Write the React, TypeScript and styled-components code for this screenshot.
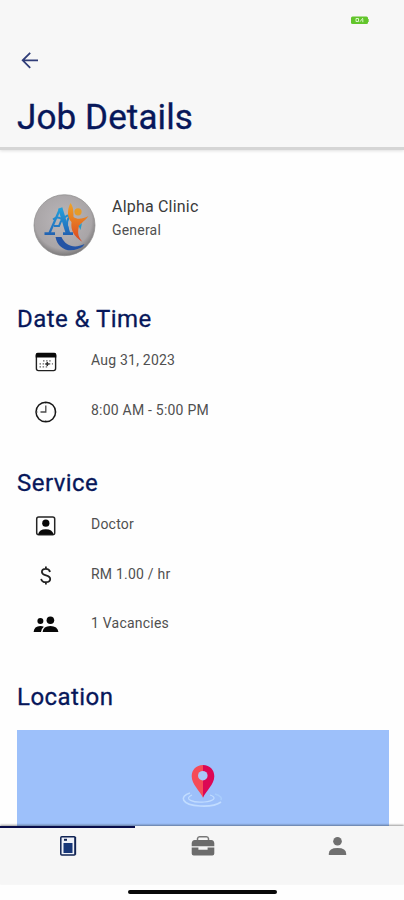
import React from 'react';
import styled, { createGlobalStyle } from 'styled-components';

const navy = '#07175a';

const GlobalStyle = createGlobalStyle`
  * { box-sizing: border-box; }
  body { margin: 0; background: #fefefe; font-family: Roboto, "Liberation Sans", sans-serif; }
  svg { display: block; flex: none; }
`;

const Screen = styled.div`
  width: 404px;
  height: 900px;
  display: flex;
  flex-direction: column;
  overflow: hidden;
`;

const Header = styled.header`
  height: 150px;
  flex: none;
  background: #f7f7f7;
  border-bottom: 3px solid #d5d5d5;
  box-shadow: 0 1px 3px rgba(0, 0, 0, 0.12);
`;

const StatusBar = styled.div`
  height: 40px;
  display: flex;
  justify-content: flex-end;
  padding: 16px 35px 0 0;
`;

const BackButton = styled.button`
  display: block;
  border: 0;
  padding: 0;
  margin: 11px 0 0 20px;
  background: none;
`;

const Title = styled.h1`
  margin: 27px 0 0 17px;
  font-size: 35px;
  line-height: 41px;
  font-weight: 400;
  letter-spacing: 0.12px;
  -webkit-text-stroke: 0.35px ${navy};
  color: ${navy};
`;

const Content = styled.main`
  flex: 1;
  min-height: 0;
  overflow: hidden;
  padding: 44px 15px 0 17px;
`;

const Clinic = styled.section`
  display: flex;
  gap: 16px;
  height: 104px;
  padding-left: 16px;
`;

const ClinicText = styled.div`
  padding-top: 3px;
`;

const ClinicName = styled.div`
  font-size: 16px;
  line-height: 20px;
  letter-spacing: 0.2px;
  color: #3a3a3a;
`;

const ClinicType = styled.div`
  margin-top: 3px;
  font-size: 14px;
  line-height: 20px;
  letter-spacing: 0.2px;
  color: #505050;
`;

const Section = styled.section<{ $height: number }>`
  height: ${(p) => p.$height}px;
  padding-top: 7px;
`;

const Heading = styled.h2`
  margin: 0;
  font-size: 24px;
  line-height: 28px;
  font-weight: 400;
  letter-spacing: 0.45px;
  -webkit-text-stroke: 0.3px ${navy};
  color: ${navy};
`;

const Row = styled.div`
  display: flex;
  align-items: flex-start;
  height: 49.5px;
  padding: 18px 0 0 16px;
`;

const RowIcon = styled.div`
  width: 58px;
`;

const RowText = styled.span`
  margin-top: -1px;
  font-size: 14px;
  line-height: 20px;
  letter-spacing: 0.22px;
  color: #505050;
`;

const Map = styled.div`
  display: flex;
  justify-content: center;
  height: 150px;
  margin-top: 19px;
  padding-top: 32px;
  background: #9dc0fa;
`;

const Nav = styled.nav`
  display: grid;
  grid-template-columns: 135px 135px 134px;
  height: 58px;
  flex: none;
  background: #f6f6f6;
  box-shadow: 0 -1px 2px rgba(0, 0, 0, 0.4);
  z-index: 1;
`;

const Tab = styled.button<{ $active?: boolean }>`
  display: flex;
  justify-content: center;
  border: 0;
  border-top: 2px solid ${(p) => (p.$active ? '#080d4a' : 'transparent')};
  padding: 7px 0 0;
  background: none;
`;

const HomeArea = styled.div`
  display: flex;
  justify-content: center;
  height: 16px;
  flex: none;
  padding-top: 6px;
  background: #fefefe;
`;

const HomeBar = styled.div`
  width: 149px;
  height: 4px;
  border-radius: 2px;
  background: #080808;
`;

const Battery = () => (
  <svg width="18" height="9" viewBox="0 0 18 9">
    <rect x="0" y="0.5" width="17" height="7.5" rx="1.5" fill="#62c52b" />
    <path d="M17.5 3v3" stroke="#8fd96a" />
    <path d="M5 2.5h2.5v3H5zM9 5.7l3-3.7M11.8 3.2v3" fill="none" stroke="#d9f6c8" strokeWidth="1" />
  </svg>
);

const Arrow = () => (
  <svg width="20" height="19" viewBox="0 0 20 19" fill="none" stroke="#303d78" strokeWidth="1.8">
    <path d="M18 9.3H3M10.2 1.8 2.7 9.3l7.5 7.5" />
  </svg>
);

const Logo = () => (
  <svg width="63" height="63" viewBox="0 0 63 63">
    <defs>
      <radialGradient id="disc" cx=".48" cy=".42" r=".58">
        <stop offset="0" stopColor="#bbb7ba" />
        <stop offset=".8" stopColor="#a9a5a7" />
        <stop offset="1" stopColor="#7b797a" />
      </radialGradient>
      <linearGradient id="blue" gradientUnits="userSpaceOnUse" x1="0" y1="13" x2="0" y2="54">
        <stop offset="0" stopColor="#22a2dc" />
        <stop offset=".5" stopColor="#2376c2" />
        <stop offset="1" stopColor="#203c91" />
      </linearGradient>
      <linearGradient id="orange" x1="0" y1="0" x2="0" y2="1">
        <stop offset="0" stopColor="#efa427" />
        <stop offset="1" stopColor="#dc4520" />
      </linearGradient>
    </defs>
    <circle cx="31.5" cy="31.2" r="30.5" fill="url(#disc)" stroke="#8b898a" strokeWidth=".7" />
    <g fill="none" stroke="url(#blue)">
      <path d="M27 15 16.5 39" strokeWidth="2.2" />
      <path d="m27.2 14 8 26" strokeWidth="4.4" />
      <path d="M11.5 39.7H22M30 39.7h10" strokeWidth="2.8" />
      <path d="M21 32h5c2-6 6-11 12-11-4 4-5 9-3 14" strokeWidth="2" />
      <path d="M20 25.5q5-4 9 0" strokeWidth="1.8" />
    </g>
    <path d="M22.5 43c2 11 12 16 22 12 4-1 6-3 7-5-10 5-19 2-23-7z" fill="#2454a5" />
    <path d="M37.5 9c3 4 3 9 3 14 4 3 9 2 15-1-4 6-9 7-10 12-1 6 0 9 4 14-9-6-12-12-11-20-5-5-4-13-1-19z" fill="url(#orange)" />
    <circle cx="45" cy="17.8" r="3.6" fill="#e59b2a" />
    <path d="m45.5 32 3.5-3-1.5 7z" fill="#289bc8" />
  </svg>
);

const CalendarIcon = () => (
  <svg width="26" height="22" viewBox="0 0 26 22">
    <rect x="3.4" y="2.6" width="19.2" height="17" rx="2" fill="#fff" stroke="#202020" strokeWidth="1.4" />
    <path d="M2.7 6.4V3.8q0-2 2-2h16.6q2 0 2 2v2.6z" fill="#090909" />
    <path d="M10 9.9h9M6.5 12.9H20M6.5 15.9h9" stroke="#666" strokeWidth="1.2" strokeDasharray="1.5 1.6" />
    <path d="M14.3 10.9v4M12.3 12.9h4" stroke="#333" strokeWidth="1.5" />
  </svg>
);

const ClockIcon = () => (
  <svg width="26" height="24" viewBox="0 0 26 24" fill="none">
    <circle cx="12.8" cy="11" r="9.8" stroke="#181818" strokeWidth="1.5" />
    <path d="M12.8 4.5V11H7.5" stroke="#4b4b4b" strokeWidth="1.3" />
    <path d="M12.8 2v1M12.8 19v1M3.8 11h1M20.8 11h1" stroke="#777" />
  </svg>
);

const PersonBoxIcon = () => (
  <svg width="26" height="22" viewBox="0 0 26 22">
    <rect x="3.7" y="2" width="18" height="17.8" rx="2" fill="#fff" stroke="#252525" strokeWidth="1.5" />
    <circle cx="12.8" cy="8.2" r="3.6" fill="#090909" />
    <path d="M5 19.5q1.2-5.2 7.8-5.2t7.8 5.2z" fill="#090909" />
  </svg>
);

const DollarIcon = () => (
  <svg width="26" height="22" viewBox="0 0 26 22" fill="none" stroke="#222" strokeWidth="1.8">
    <path d="M17 7C16.3 2.9 8.9 3 8.9 7c0 4.4 8.3 2.4 8.3 7 0 4.2-8.3 4.4-9-.2M12.9 1.5V4M12.9 17v2.4" />
  </svg>
);

const PeopleIcon = () => (
  <svg width="26" height="22" viewBox="0 0 26 22" fill="#080808">
    <circle cx="7.4" cy="6.9" r="3" />
    <circle cx="17.4" cy="6.2" r="3.8" />
    <path d="M.6 18q.5-6 6.7-6 2.1 0 3.5.7-2.4 1.8-2.8 5.3zM9.6 18q.5-6 7.8-6t8 6z" />
  </svg>
);

const Pin = () => (
  <svg width="46" height="46" viewBox="0 0 46 46">
    <g fill="none" stroke="#c1dcff" strokeWidth="1.6">
      <path d="M10 31C-1 34 1 43 20 44c10 .5 17-1 21-4" />
      <path d="M12 33c-9 4 1 8 12 7 11-1 13-5 6-7" strokeWidth="1.2" />
      <path d="M35 32c6 2 7 4 6 6" stroke="#a9cdfc" />
    </g>
    <path d="M23 3C16 3 11.7 8 11.7 14.2c0 8 8 14.3 11.3 21.5z" fill="#f64b57" />
    <path d="M23 3c7 0 11.3 5 11.3 11.2 0 8-8 14.3-11.3 21.5z" fill="#dc0754" />
    <circle cx="22.8" cy="13.7" r="4.8" fill="#a9c8f8" />
  </svg>
);

const DocumentIcon = () => (
  <svg width="18" height="22" viewBox="0 0 18 22">
    <rect x="1.8" y="1.7" width="14.4" height="18.2" rx="1" fill="#eef1f8" stroke="#102353" strokeWidth="1.5" />
    <path d="M5 4.8h3" stroke="#102353" strokeWidth="2" />
    <rect x="4.5" y="8" width="9" height="10" fill="#173778" />
    <path d="M16.3 2v17.5" stroke="#102353" strokeWidth="1.7" />
  </svg>
);

const BriefcaseIcon = () => (
  <svg width="24" height="22" viewBox="0 0 24 22">
    <path d="M6.5 6V3.7Q6.8 1.7 8.5 1.7h7q1.7 0 2 2V6" fill="none" stroke="#777" strokeWidth="1.5" />
    <path d="M3.7 5h16.6q2.5 0 3 3v3.2H.7V8q.5-3 3-3zM.7 12.4h6.7v2.3h9.2v-2.3h6.7v6.1q0 2-2 2H2.7q-2 0-2-2z" fill="#6c6c6c" />
  </svg>
);

const ProfileIcon = () => (
  <svg width="20" height="22" viewBox="0 0 20 22" fill="#707070">
    <circle cx="10.5" cy="6.3" r="4.3" />
    <path d="M1.8 20v-1.3q0-5.7 8.7-5.7t8.7 5.7V20z" />
  </svg>
);

const timeRows = [
  { icon: <CalendarIcon />, text: 'Aug 31, 2023' },
  { icon: <ClockIcon />, text: '8:00 AM - 5:00 PM' },
];

const serviceRows = [
  { icon: <PersonBoxIcon />, text: 'Doctor' },
  { icon: <DollarIcon />, text: 'RM 1.00 / hr' },
  { icon: <PeopleIcon />, text: '1 Vacancies' },
];

type DetailProps = { title: string; height: number; rows: typeof timeRows };

const DetailSection = ({ title, height, rows }: DetailProps) => (
  <Section $height={height}>
    <Heading>{title}</Heading>
    {rows.map((row) => (
      <Row key={row.text}>
        <RowIcon>{row.icon}</RowIcon>
        <RowText>{row.text}</RowText>
      </Row>
    ))}
  </Section>
);

export default function App() {
  return (
    <Screen>
      <GlobalStyle />
      <Header>
        <StatusBar><Battery /></StatusBar>
        <BackButton aria-label="Back"><Arrow /></BackButton>
        <Title>Job Details</Title>
      </Header>
      <Content>
        <Clinic>
          <Logo />
          <ClinicText>
            <ClinicName>Alpha Clinic</ClinicName>
            <ClinicType>General</ClinicType>
          </ClinicText>
        </Clinic>
        <DetailSection title="Date &amp; Time" height={164} rows={timeRows} />
        <DetailSection title="Service" height={214} rows={serviceRows} />
        <Section $height={220}>
          <Heading>Location</Heading>
          <Map><Pin /></Map>
        </Section>
      </Content>
      <Nav>
        <Tab $active aria-label="Jobs"><DocumentIcon /></Tab>
        <Tab aria-label="Work"><BriefcaseIcon /></Tab>
        <Tab aria-label="Profile"><ProfileIcon /></Tab>
      </Nav>
      <HomeArea><HomeBar /></HomeArea>
    </Screen>
  );
}
